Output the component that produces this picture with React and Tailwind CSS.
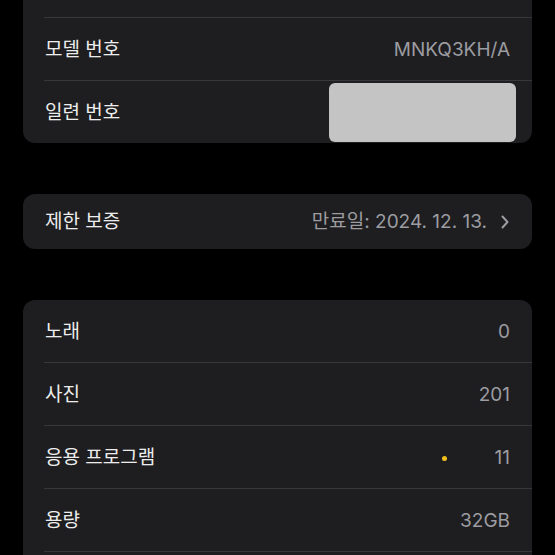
export default function App() {
  const font = { fontFamily: 'Inter, "Noto Sans CJK KR", sans-serif' };
  const Row = ({ label, value, divider = true, children }) => (
    <div className="relative flex h-[63px] items-center justify-between pl-[22px] pr-[22px] pt-[2px]">
      <span className="text-[19px] text-[#ededed]">{label}</span>
      {children ?? <span className="text-[19px] text-[#9c9ca1]">{value}</span>}
      {divider && <div className="absolute bottom-0 left-[21px] right-0 h-px bg-[#38383a]" />}
    </div>
  );
  return (
    <div className="h-[555px] w-[555px] overflow-hidden bg-black" style={font}>
      <div className="mx-[23px] -mt-[45px] overflow-hidden rounded-[12px] bg-[#1e1e20]">
        <Row label="" value="" />
        <Row label="모델 번호" value="MNKQ3KH/A" />
        <div className="flex h-[62px] items-center justify-between pl-[22px] pr-[16px]">
          <span className="pt-[2px] text-[19px] text-[#ededed]">일련 번호</span>
          <div className="h-[59px] w-[187px] rounded-[6px] bg-[#c4c4c4]" />
        </div>
      </div>
      <div className="mx-[23px] mt-[51px] flex h-[55px] items-center justify-between rounded-[12px] bg-[#1e1e20] pl-[22px] pr-[23px] pt-[1px]">
        <span className="text-[19px] text-[#ededed]">제한 보증</span>
        <div className="flex items-center gap-[14px]">
          <span className="text-[19px] text-[#9c9ca1]">만료일: 2024. 12. 13.</span>
          <svg width="8" height="14" viewBox="0 0 8 14" fill="none">
            <path d="M1.5 1.5 L6.5 7 L1.5 12.5" stroke="#9c9ca1" strokeWidth="2" strokeLinecap="round" strokeLinejoin="round" />
          </svg>
        </div>
      </div>
      <div className="mx-[23px] mt-[51px] overflow-hidden rounded-t-[12px] bg-[#1e1e20]">
        <Row label="노래" value="0" />
        <Row label="사진" value="201" />
        <Row label="응용 프로그램">
          <div className="flex items-center gap-[48px]">
            <div className="h-[5px] w-[5px] rounded-full bg-[#f2c21b]" />
            <span className="text-[19px] text-[#9c9ca1]">11</span>
          </div>
        </Row>
        <Row label="용량" value="32GB" />
        <Row label="" value="" divider={false} />
      </div>
    </div>
  );
}
